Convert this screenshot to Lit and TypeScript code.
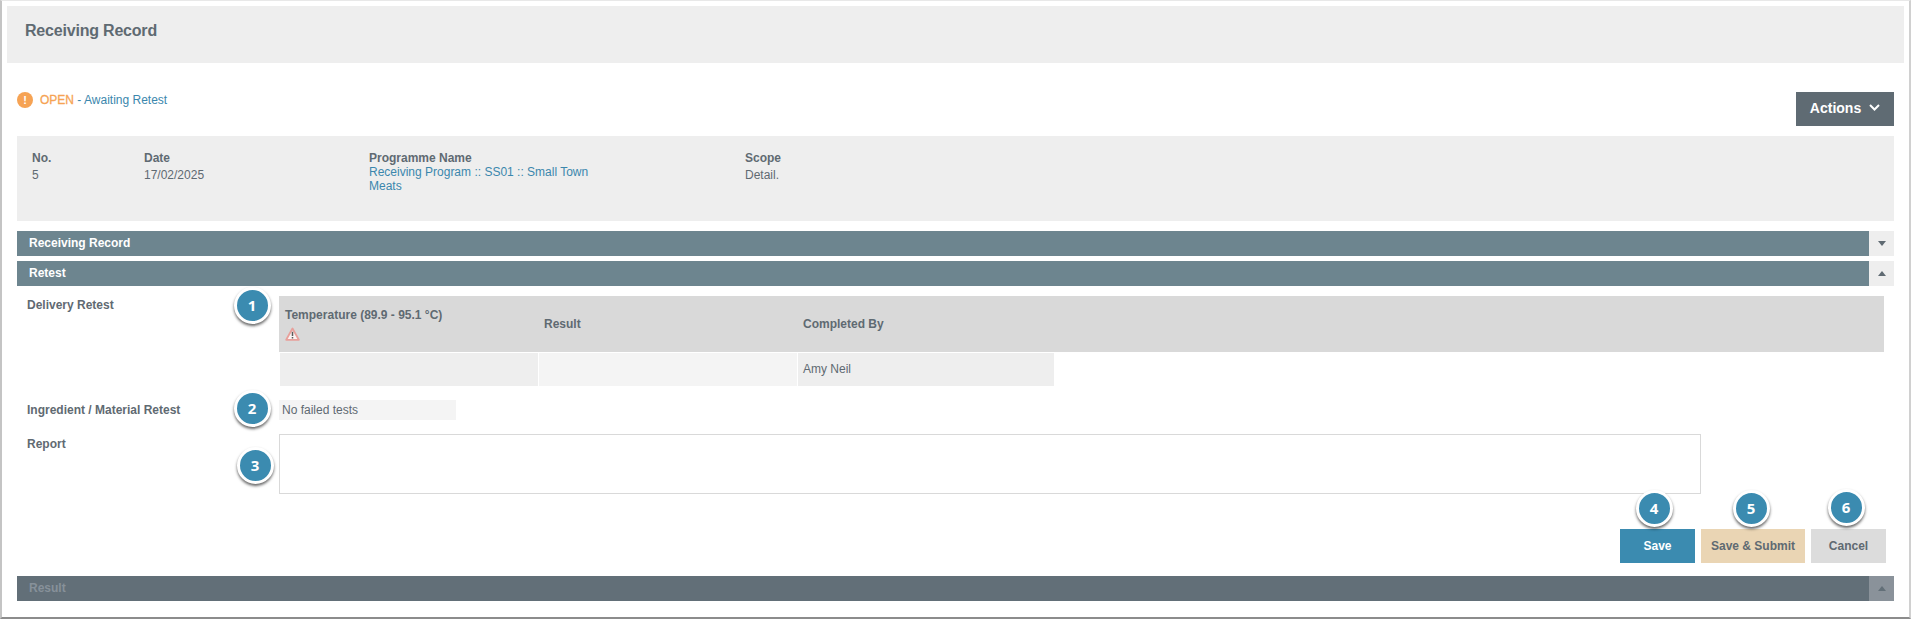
import { LitElement, html, css } from "lit";
import { customElement } from "lit/decorators.js";

const caret = (up: boolean) => html`<svg width="8" height="5" viewBox="0 0 8 5"><path d="${up ? "M4 0 L8 5 L0 5 Z" : "M0 0 L8 0 L4 5 Z"}" fill="currentColor"></path></svg>`;

@customElement("app-root")
export class AppRoot extends LitElement {
  static styles = css`
    :host { display: block; width: 1912px; height: 621px; background: #fff; font-family: "Liberation Sans", Arial, sans-serif; font-size: 12px; color: #5f6a72; overflow: hidden; }
    .frame { position: relative; box-sizing: border-box; width: 1911px; height: 619px; border-left: 2px solid #c4c4c4; border-top: 1px solid #e8e8e8; border-right: 2px solid #d0d0d0; border-bottom: 2px solid #8c8c8c; padding: 5px 0 0 5px; display: flex; flex-direction: column; }
    .title { height: 57px; margin-right: 5px; background: #eee; box-sizing: border-box; padding: 10px 0 0 18px; font-size: 16px; font-weight: 700; letter-spacing: -.2px; line-height: 30px; flex: none; display: flex; align-items: flex-start; }
    .body { display: flex; flex-direction: column; padding: 0 0 0 10px; width: 1877px; }
    .status { height: 34px; margin-top: 29px; display: flex; justify-content: space-between; }
    .state { display: flex; align-items: flex-start; height: 16px; line-height: 16px; gap: 7px; }
    .dot { width: 16px; height: 16px; border-radius: 50%; background: #f6a354; color: #fff; font-weight: 700; font-size: 11px; text-align: center; line-height: 16px; }
    .open { color: #f6a354; font-weight: 400; -webkit-text-stroke: .3px #f6a354; }
    .link { color: #3b87ad; }
    .actions { width: 98px; height: 34px; background: #5f6b73; color: #fff; font-weight: 700; font-size: 14px; display: flex; align-items: center; justify-content: center; gap: 8px; padding-bottom: 3px; box-sizing: border-box; }
    .panel { margin-top: 10px; height: 85px; background: #eee; box-sizing: border-box; padding: 15px 0 0 15px; display: grid; grid-template-columns: 112px 225px 376px 1fr; line-height: 14px; }
    .panel b { display: block; margin-bottom: 3px; }
    .panel .prog b { margin-bottom: 0; }
    .prog { width: 240px; }
    .bar { height: 25px; display: flex; margin-top: 5px; flex: none; }
    .bar .lbl { flex: 1; background: #6d858f; color: #fff; font-weight: 700; line-height: 25px; padding-left: 12px; }
    .bar .tog { width: 25px; background: #eee; display: flex; align-items: center; justify-content: center; color: #5f6a72; }
    .first { margin-top: 10px; }
    .bar.dim { margin-top: 13px; }
    .bar.dim .lbl { background: #626f78; color: #87919a; }
    .bar.dim .tog { background: #8a929a; color: #626f78; }
    .row { display: grid; grid-template-columns: 262px 1fr; font-weight: 700; }
    .row .name { padding-left: 10px; }
    .delivery { margin-top: 10px; height: 90px; }
    .delivery .name { padding-top: 2px; line-height: 14px; }
    .tbl { width: 1605px; display: grid; grid-template-columns: 259px 259px 1087px; }
    .th { background: #d9d9d9; height: 56px; display: flex; flex-direction: column; justify-content: center; padding-left: 6px; line-height: 14px; box-sizing: border-box; margin-bottom: 1px; }
    .th svg { margin-top: 5px; display: block; }
    .td { height: 33px; background: #eee; margin-left: 1px; font-weight: 400; line-height: 33px; padding-left: 5px; }
    .td.lt { background: #f4f4f4; }
    .td.w { width: 251px; }
    .ingredient { margin-top: 14px; height: 20px; }
    .ingredient .name { line-height: 20px; }
    .ingredient .val { width: 174px; height: 20px; background: #f4f4f4; font-weight: 400; line-height: 20px; padding-left: 3px; }
    .report { margin-top: 14px; height: 60px; }
    .report .name { padding-top: 3px; line-height: 14px; }
    .area { width: 1420px; height: 58px; border: 1px solid #d9d9d9; }
    .btns { display: flex; justify-content: flex-end; gap: 6px; margin-top: 35px; padding-right: 8px; }
    .btn { height: 34px; width: 75px; display: flex; align-items: center; justify-content: center; font-weight: 700; }
    .save { background: #3b8bb0; color: #fff; }
    .sub { background: #ead5b4; width: 104px; }
    .cancel { background: #dcdcdc; }
    .badge { position: absolute; box-sizing: content-box; width: 31px; height: 31px; border: 3px solid #fff; border-radius: 50%; background: #3b8bb0; color: #fff; font: 700 15px/31px "Open Sans", sans-serif; text-align: center; box-shadow: 0 2px 3px rgba(0,0,0,.6); }
  `;

  private badge(n: number, x: number, y: number) {
    return html`<div class="badge" style="left:${x - 18.5 - 2}px;top:${y - 18.5 - 1}px">${n}</div>`;
  }

  render() {
    return html`
      <div class="frame">
        <div class="title">Receiving Record</div>
        <div class="body">
          <div class="status">
            <div class="state"><span class="dot">!</span><span><span class="open">OPEN</span> <span class="link">- Awaiting Retest</span></span></div>
            <div class="actions">Actions <svg width="11" height="7" viewBox="0 0 11 7"><path d="M1 1 L5.5 5.5 L10 1" fill="none" stroke="#fff" stroke-width="2"></path></svg></div>
          </div>
          <div class="panel">
            <div><b>No.</b>5</div>
            <div><b>Date</b>17/02/2025</div>
            <div class="prog"><b>Programme Name</b><span class="link">Receiving Program :: SS01 :: Small Town Meats</span></div>
            <div><b>Scope</b>Detail.</div>
          </div>
          <div class="bar first"><div class="lbl">Receiving Record</div><div class="tog">${caret(false)}</div></div>
          <div class="bar"><div class="lbl">Retest</div><div class="tog">${caret(true)}</div></div>
          <div class="row delivery">
            <div class="name">Delivery Retest</div>
            <div class="tbl">
              <div class="th"><span>Temperature (89.9 - 95.1 °C)</span>
                <svg width="15" height="14" viewBox="0 0 15 14"><path d="M7.5 1.5 L13.8 12.8 L1.2 12.8 Z" fill="#fbf3f2" stroke="#e8a09b" stroke-width="1.8" stroke-linejoin="round"></path><path d="M7.5 4.8 V9 M7.5 10 V11.5" stroke="#5a5a5a" stroke-width="1.5"></path></svg></div>
              <div class="th">Result</div>
              <div class="th">Completed By</div>
              <div class="td"></div><div class="td lt"></div><div class="td w">Amy Neil</div>
            </div>
          </div>
          <div class="row ingredient"><div class="name">Ingredient / Material Retest</div><div class="val">No failed tests</div></div>
          <div class="row report"><div class="name">Report</div><div class="area"></div></div>
          <div class="btns"><div class="btn save">Save</div><div class="btn sub">Save &amp; Submit</div><div class="btn cancel">Cancel</div></div>
          <div class="bar dim"><div class="lbl">Result</div><div class="tog">${caret(true)}</div></div>
        </div>
        ${this.badge(1, 252, 305)}${this.badge(2, 252, 408)}${this.badge(3, 255, 465)}${this.badge(4, 1654, 508)}${this.badge(5, 1751, 508)}${this.badge(6, 1846, 507)}
      </div>`;
  }
}
